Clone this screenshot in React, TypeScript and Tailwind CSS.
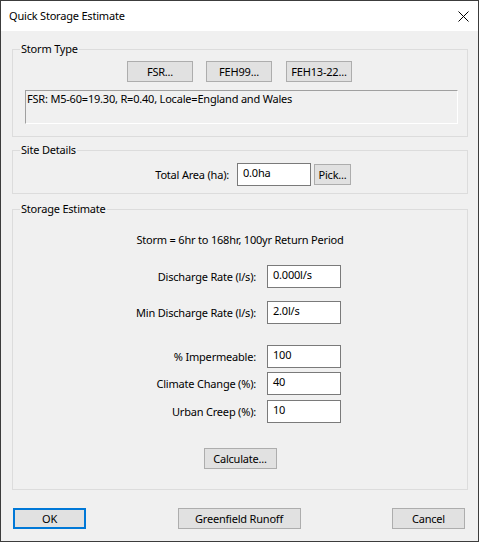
import React from 'react';

const font = { fontFamily: '"Noto Sans", "Open Sans", sans-serif' };

function Btn({ label, w, focused }: { label: string; w: string; focused?: boolean }) {
  return (
    <div
      className={`${w} h-[21px] flex items-center justify-center whitespace-nowrap bg-[#e1e1e1] text-[11px] tracking-[-0.2px] text-black leading-none ${
        focused ? 'border-2 border-[#0078d7]' : 'border border-[#adadad]'
      }`}
    >
      {label}
    </div>
  );
}

function Field({ value }: { value: string }) {
  return (
    <div className="w-[74px] h-[23px] bg-white border border-[#7a7a7a] pl-[5px] pt-[1px] text-[11px] tracking-[-0.2px] leading-[16px] text-black">
      {value}
    </div>
  );
}

function Row({ label, value, mt }: { label: string; value: string; mt: string }) {
  return (
    <div className={`flex items-center ${mt}`}>
      <div className="w-[243px] text-right text-[11px] tracking-[-0.2px] leading-[16px] text-black">{label}</div>
      <div className="ml-[11px]">
        <Field value={value} />
      </div>
    </div>
  );
}

function Group({ title, className, children }: { title: string; className: string; children: React.ReactNode }) {
  return (
    <fieldset className={`border border-[#dcdcdc] w-[456px] ${className}`}>
      <legend className="ml-[7px] px-[1px] text-[11px] tracking-[-0.2px] leading-[16px] text-black">{title}</legend>
      {children}
    </fieldset>
  );
}

export default function App() {
  return (
    <div
      className="w-[479px] h-[542px] border border-[#3c3c3c] bg-[#f0f0f0] flex flex-col overflow-hidden"
      style={font}
    >
      <div className="h-[30px] bg-white flex items-center justify-between shrink-0">
        <span className="ml-[8px] text-[11px] tracking-[-0.2px] text-black">Quick Storage Estimate</span>
        <svg className="mr-[9px]" width="11" height="11" viewBox="0 0 11 11">
          <path d="M0.5 0.5 L10.5 10.5 M10.5 0.5 L0.5 10.5" stroke="#000" strokeWidth="1" />
        </svg>
      </div>

      <div className="pl-[11px] flex flex-col">
        <Group title="Storm Type" className="mt-[10px] h-[96px]">
          <div className="flex mt-[4px] pl-[114px] gap-[13px]">
            <Btn label="FSR..." w="w-[66px]" />
            <Btn label="FEH99..." w="w-[66px]" />
            <div className="ml-[1px]">
              <Btn label="FEH13-22..." w="w-[66px]" />
            </div>
          </div>
          <div className="ml-[12px] mt-[8px] w-[433px] h-[34px] border-t border-l border-t-[#a0a0a0] border-l-[#a0a0a0] border-r border-b border-r-white border-b-white text-[11px] tracking-[-0.2px] leading-[16px] text-black pl-[1px]">
            FSR: M5-60=19.30, R=0.40, Locale=England and Wales
          </div>
        </Group>

        <Group title="Site Details" className="mt-[5px] h-[52px]">
          <div className="flex items-center mt-[5px]">
            <div className="w-[216px] text-right text-[11px] tracking-[-0.2px] leading-[16px] text-black">Total Area (ha):</div>
            <div className="ml-[8px]">
              <Field value="0.0ha" />
            </div>
            <div className="ml-[3px]">
              <Btn label="Pick..." w="w-[37px]" />
            </div>
          </div>
        </Group>

        <Group title="Storage Estimate" className="mt-[7px] h-[289px]">
          <div className="mt-[15px] text-center text-[11px] tracking-[-0.2px] leading-[16px] text-black">
            Storm = 6hr to 168hr, 100yr Return Period
          </div>
          <Row label="Discharge Rate (l/s):" value="0.000l/s" mt="mt-[17px]" />
          <Row label="Min Discharge Rate (l/s):" value="2.0l/s" mt="mt-[13px]" />
          <Row label="% Impermeable:" value="100" mt="mt-[21px]" />
          <Row label="Climate Change (%):" value="40" mt="mt-[4px]" />
          <Row label="Urban Creep (%):" value="10" mt="mt-[5px]" />
          <div className="flex justify-center mt-[25px]">
            <Btn label="Calculate..." w="w-[73px]" />
          </div>
        </Group>
      </div>

      <div className="flex justify-between pl-[12px] pr-[13px] mt-[18px]">
        <Btn label="OK" w="w-[73px]" focused />
        <Btn label="Greenfield Runoff" w="w-[123px]" />
        <Btn label="Cancel" w="w-[73px]" />
      </div>
    </div>
  );
}
